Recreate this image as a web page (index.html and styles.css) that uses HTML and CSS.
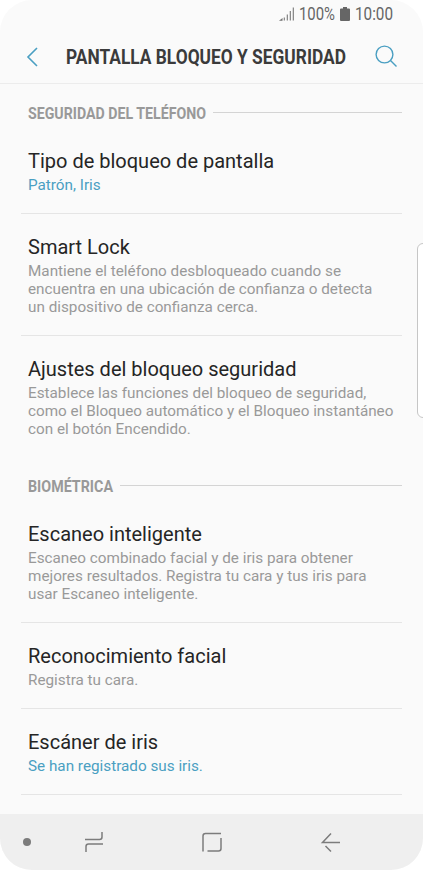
FILE: index.html
```html
<!DOCTYPE html>
<html lang="es">
<head>
<meta charset="utf-8">
<title>Pantalla bloqueo y seguridad</title>
<link rel="stylesheet" href="styles.css">
</head>
<body>
<div class="phone">
  <div class="status">
    <svg class="signal" width="15" height="14" viewBox="0 0 15 14"><path d="M.5 13.300h1.500v-1.200zM4.300 13.500V10.500M7.300 13.500V7.500M10.300 13.500V4M13.300 13.500V.5"/></svg>
    <svg class="condensed" width="36" height="20"><text x="0" y="16" textLength="36" lengthAdjust="spacingAndGlyphs">100%</text></svg>
    <svg class="battery" width="10" height="14" viewBox="0 0 10 14"><path d="M3 0h4v1.500h2q1 0 1 1V13q0 1-1 1H1q-1 0-1-1V2.500q0-1 1-1h2z"/></svg>
    <svg class="condensed" width="39" height="20"><text x="0" y="16" textLength="38" lengthAdjust="spacingAndGlyphs">10:00</text></svg>
  </div>
  <header class="bar">
    <svg class="line-icon" width="13" height="20" viewBox="0 0 13 20"><path d="M11 1L2 10l9 9"/></svg>
    <svg class="title" width="281" height="28"><text x="0" y="21" textLength="280" lengthAdjust="spacingAndGlyphs">PANTALLA BLOQUEO Y SEGURIDAD</text></svg>
    <svg class="line-icon search" width="23" height="23" viewBox="0 0 23 23"><circle cx="9.500" cy="9.500" r="8.400"/><path d="M15.500 15.500l6 6"/></svg>
  </header>
  <main class="list">
    <div class="section first"><svg width="179" height="20"><text x="0" y="16" textLength="178" lengthAdjust="spacingAndGlyphs">SEGURIDAD DEL TELÉFONO</text></svg><i></i></div>
    <div class="row"><h2>Tipo de bloqueo de pantalla</h2><p class="value">Patrón, Iris</p></div>
    <div class="row"><h2>Smart Lock</h2><p>Mantiene el teléfono desbloqueado cuando se<br>encuentra en una ubicación de confianza o detecta<br>un dispositivo de confianza cerca.</p></div>
    <div class="row last"><h2>Ajustes del bloqueo seguridad</h2><p>Establece las funciones del bloqueo de seguridad,<br>como el Bloqueo automático y el Bloqueo instantáneo<br>con el botón Encendido.</p></div>
    <div class="section"><svg width="86" height="20"><text x="0" y="16" textLength="85" lengthAdjust="spacingAndGlyphs">BIOMÉTRICA</text></svg><i></i></div>
    <div class="row"><h2>Escaneo inteligente</h2><p>Escaneo combinado facial y de iris para obtener<br>mejores resultados. Registra tu cara y tus iris para<br>usar Escaneo inteligente.</p></div>
    <div class="row"><h2>Reconocimiento facial</h2><p>Registra tu cara.</p></div>
    <div class="row"><h2>Escáner de iris</h2><p class="value">Se han registrado sus iris.</p></div>
  </main>
  <nav class="nav">
    <span class="dot"></span>
    <svg class="recent" width="20" height="22" viewBox="0 0 20 22"><path d="M1 8.500h14.500q2.500 0 2.500-2.500V1M19 13H4.500Q2 13 2 15.500V21"/></svg>
    <svg class="home" width="20" height="21" viewBox="0 0 20 21"><path d="M1 19.500V4q0-2.500 2.500-2.500H19M19 6v10.500q0 2.500-2.500 2.500H5.500"/></svg>
    <svg class="back" width="20" height="21" viewBox="0 0 20 21"><path d="M10 1.500L1.500 10.500H19M4.500 14l5.500 5.500"/></svg>
  </nav>
  <div class="edge"></div>
</div>
</body>
</html>
```
FILE: styles.css
```css
body { margin: 0; background: #fff; font-family: Roboto, sans-serif; }
svg { display: block; flex: none; overflow: visible; }
.phone {
  position: relative;
  display: flex;
  flex-direction: column;
  width: 423px;
  height: 870px;
  border-radius: 32px;
  overflow: hidden;
  background: #fafafa;
}
.status { display: flex; align-items: center; height: 28px; padding-left: 280px; }
.signal { fill: #777; stroke: #777; stroke-width: 1.1; margin-right: 4px; }
.battery { fill: #666; margin: 0 5px; }
.condensed { fill: #666; font-size: 18px; }
.bar {
  display: flex;
  align-items: center;
  box-sizing: border-box;
  height: 56px;
  padding: 2px 0 0 26px;
  border-bottom: 1px solid #ececec;
}
.line-icon { fill: none; stroke: #4a9fc2; stroke-width: 1.6; }
.search { stroke-width: 1.4; margin-left: 28px; }
.title { fill: #3b3b3b; font-size: 20px; font-weight: 700; margin-left: 27px; }
.list { flex: 1; padding: 0 21px; }
.section { display: flex; align-items: center; height: 30px; padding: 13px 0 0 7px; }
.first { padding-top: 14px; }
.section svg { fill: #999; font-size: 16.500px; font-weight: 700; }
.section i { flex: 1; height: 1px; margin: -2px 0 0 6px; background: #d4d4d4; }
.row { box-sizing: border-box; padding: 21px 0 19px 7px; border-bottom: 1px solid #e5e5e5; }
.last { border-color: transparent; }
h2 { margin: 0 0 3px; font-size: 20px; line-height: 24px; font-weight: 400; color: #252525; white-space: nowrap; }
p { margin: 0; font-size: 15.270px; line-height: 18px; color: #999; white-space: nowrap; }
.value { color: #4a9fc2; }
.nav { display: flex; align-items: center; height: 56px; padding: 0 0 0 23px; background: #efefef; }
.nav svg { fill: none; stroke: #7c7c7c; stroke-width: 1.500; }
.dot { width: 8px; height: 8px; border-radius: 50%; background: #7c7c7c; }
.recent { margin-left: 53px; }
.home { margin-left: 98px; }
.back { margin-left: 99px; }
.edge {
  position: absolute;
  top: 243px;
  right: -2px;
  box-sizing: border-box;
  width: 8px;
  height: 175px;
  border: 1px solid #c6c6c6;
  border-radius: 6px 0 0 6px;
  background: #fff;
}
```
